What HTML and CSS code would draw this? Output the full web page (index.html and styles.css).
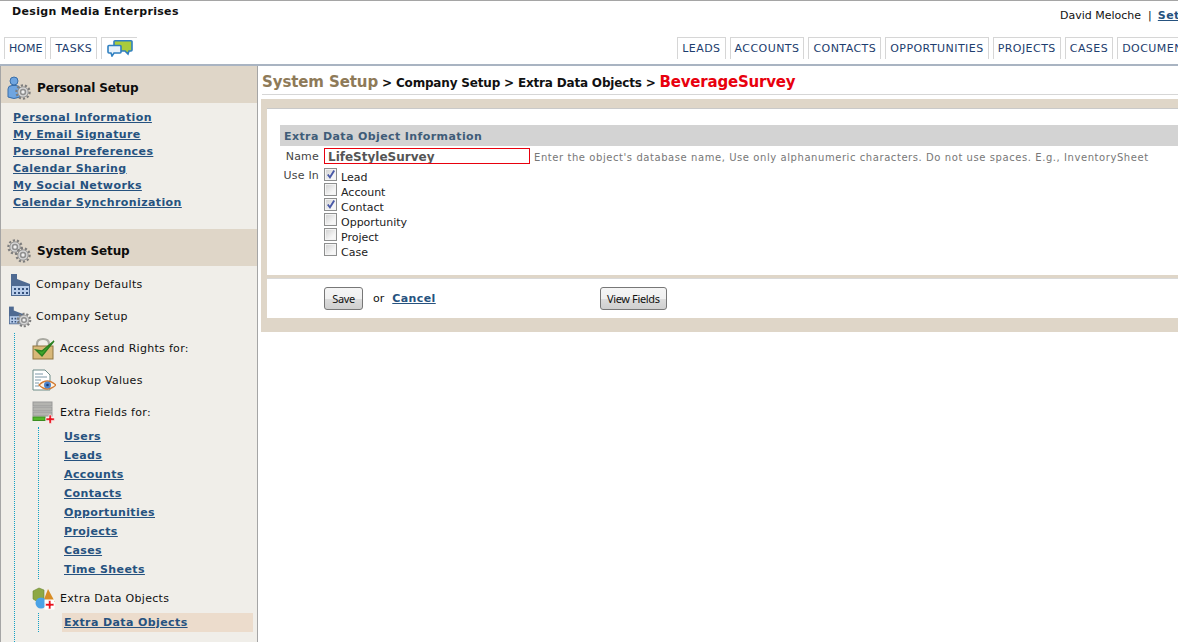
FILE: index.html
```html
<!DOCTYPE html>
<html lang="en">
<head>
<meta charset="utf-8">
<title>Extra Data Objects</title>
<link rel="stylesheet" href="styles.css">
</head>
<body>
<svg class="defs" width="0" height="0" aria-hidden="true">
  <defs>
    <g id="gear">
      <circle cx="0" cy="0" r="6.6" fill="none" stroke="#7d7d7d" stroke-width="2.2" stroke-dasharray="2.2 1.9"/>
      <circle cx="0" cy="0" r="5.2" fill="#d4d4d4" stroke="#8a8a8a" stroke-width=".8"/>
      <circle cx="0" cy="0" r="3.2" fill="#8f8f8f"/>
      <circle cx="0" cy="0" r="1.700" fill="#efefef"/>
    </g>
    <g id="factory">
      <rect x="0" y="0" width="6" height="12" fill="#4f6a92"/>
      <path d="M0 9 L6 5 L19 10 V22 H0Z" fill="#4f6a92"/>
      <rect x="1" y="12" width="17" height="9" fill="#b9cdea"/>
      <path d="M3 14h2v2h-2zM7 14h2v2h-2zM11 14h2v2h-2zM15 14h2v2h-2zM3 18h2v2h-2zM7 18h2v2h-2zM11 18h2v2h-2zM15 18h2v2h-2z" fill="#34507c"/>
    </g>
    <g id="plus">
      <path d="M3 0h2.4v3H8.4v2.4H5.4v3H3v-3H0V3h3Z" fill="#e8101c" stroke="#fff" stroke-width=".6"/>
    </g>
  </defs>
</svg>
<header class="topbar">
  <div class="top-row">
    <div class="company">Design Media Enterprises</div>
    <div class="user">David Meloche<span class="user-sep">|</span><a class="link" href="#">Setup</a></div>
  </div>
  <nav class="tabs">
    <div class="tab-group">
      <a class="tab tab-home" href="#">HOME</a>
      <a class="tab" href="#">TASKS</a>
      <a class="tab tab-icon" href="#">
        <svg width="26" height="17" viewBox="0 0 26 17">
          <path d="M7 1.500 Q7 .8 8 .8 H24 Q25 .8 25 1.500 V10 Q25 11 24 11 H22 L21 14 L18 11 H8 Q7 11 7 10Z" fill="#a9cb3c" stroke="#2f7fc0" stroke-width="1.600"/>
          <path d="M1 6.500 Q1 5.500 2 5.500 H13 Q14 5.500 14 6.500 V12 Q14 13 13 13 H7 L5 16 L4 13 H2 Q1 13 1 12Z" fill="#e8f2fb" stroke="#2f7fc0" stroke-width="1.600"/>
        </svg>
      </a>
    </div>
    <div class="tab-group tab-group-main">
      <a class="tab" href="#">LEADS</a>
      <a class="tab" href="#">ACCOUNTS</a>
      <a class="tab" href="#">CONTACTS</a>
      <a class="tab" href="#">OPPORTUNITIES</a>
      <a class="tab" href="#">PROJECTS</a>
      <a class="tab" href="#">CASES</a>
      <a class="tab" href="#">DOCUMENTS</a>
    </div>
  </nav>
</header>

<div class="layout">
  <aside class="sidebar">
    <section class="side-head">
      <svg class="head-icon" width="24" height="24" viewBox="0 0 24 24">
        <circle cx="7" cy="5" r="4" fill="#6fa5e0" stroke="#3a6ea8"/>
        <path d="M1 21 V13 Q1 9.500 5 9.500 H9 Q13 9.500 13 13 V21 Q7 24 1 21Z" fill="#6fa5e0" stroke="#3a6ea8"/>
        <use href="#gear" transform="translate(16 16)"/>
      </svg>
      <span>Personal Setup</span>
    </section>
    <ul class="personal-links">
      <li><a class="link" href="#">Personal Information</a></li>
      <li><a class="link" href="#">My Email Signature</a></li>
      <li><a class="link" href="#">Personal Preferences</a></li>
      <li><a class="link" href="#">Calendar Sharing</a></li>
      <li><a class="link" href="#">My Social Networks</a></li>
      <li><a class="link" href="#">Calendar Synchronization</a></li>
    </ul>
    <section class="side-head">
      <svg class="head-icon" width="24" height="24" viewBox="0 0 24 24">
        <use href="#gear" transform="translate(8 8)"/>
        <use href="#gear" transform="translate(16 16)"/>
      </svg>
      <span>System Setup</span>
    </section>
    <div class="tree-row level-one first-row">
      <svg class="tree-icon" width="24" height="24" viewBox="0 0 20 24"><use href="#factory" y="1"/></svg>
      <span>Company Defaults</span>
    </div>
    <div class="tree-row level-one">
      <svg class="tree-icon" width="24" height="24" viewBox="0 0 24 24">
        <use href="#factory" transform="scale(.8) translate(0 2)"/>
        <use href="#gear" transform="translate(15 15) scale(.95)"/>
      </svg>
      <span>Company Setup</span>
    </div>
    <div class="branch">
      <div class="tree-row level-two">
        <svg class="tree-icon" width="24" height="24" viewBox="0 0 24 24">
          <path d="M5 10 V7 Q5 2 11 2 Q17 2 17 7 V10" fill="none" stroke="#a8a8a0" stroke-width="2.200"/>
          <rect x="1" y="9" width="20" height="13" fill="#d8b878" stroke="#8e7440"/>
          <path d="M4 13 L10 19 L22 4 L10 14Z" fill="#3fa52c" stroke="#2a8020" stroke-width="1.400"/>
        </svg>
        <span>Access and Rights for:</span>
      </div>
      <div class="tree-row level-two">
        <svg class="tree-icon" width="24" height="24" viewBox="0 0 24 24">
          <path d="M1 1 H13 L18 6 V21 H1Z" fill="#fff" stroke="#6d8b88"/>
          <path d="M3 5h8M3 8h12M3 11h6M3 14h4M3 17h4" stroke="#7c98a8"/>
          <path d="M7 16 Q15 8 24 16 Q15 24 7 16Z" fill="#fdf3e4" stroke="#d27a30" stroke-width="1.200"/>
          <circle cx="15.500" cy="16" r="3.500" fill="#4d84cc"/>
          <circle cx="15.500" cy="16" r="1.300" fill="#1c3a70"/>
        </svg>
        <span>Lookup Values</span>
      </div>
      <div class="tree-row level-two">
        <svg class="tree-icon" width="24" height="24" viewBox="0 0 24 24">
          <rect x="1" y="1" width="19" height="4" fill="#b4b4b0" stroke="#999"/>
          <rect x="1" y="6" width="19" height="4" fill="#b4b4b0" stroke="#999"/>
          <rect x="1" y="11" width="19" height="4" fill="#b4b4b0" stroke="#999"/>
          <rect x="1" y="16" width="12" height="3.500" fill="#54b82c" stroke="#3c8c20"/>
          <use href="#plus" transform="translate(14 14)"/>
        </svg>
        <span>Extra Fields for:</span>
      </div>
      <ul class="sub-links">
        <li><a class="link" href="#">Users</a></li>
        <li><a class="link" href="#">Leads</a></li>
        <li><a class="link" href="#">Accounts</a></li>
        <li><a class="link" href="#">Contacts</a></li>
        <li><a class="link" href="#">Opportunities</a></li>
        <li><a class="link" href="#">Projects</a></li>
        <li><a class="link" href="#">Cases</a></li>
        <li><a class="link" href="#">Time Sheets</a></li>
      </ul>
      <div class="tree-row level-two objects-row">
        <svg class="tree-icon" width="24" height="24" viewBox="0 0 24 24">
          <path d="M1 4 L7 1 L12 3 V12 L6 15 L1 12Z" fill="#8da844" stroke="#6c8434" stroke-width=".6"/>
          <path d="M16 2 L23 15 H11Z" fill="#d88c24"/>
          <circle cx="9" cy="16" r="5.500" fill="#4aa2e6"/>
          <rect x="12.500" y="12.500" width="10" height="10" fill="#fff"/>
          <use href="#plus" transform="translate(13.500 13.500)"/>
        </svg>
        <span>Extra Data Objects</span>
      </div>
      <ul class="sub-links">
        <li class="current"><a class="link" href="#">Extra Data Objects</a></li>
      </ul>
      <div class="tree-row level-two">
        <svg class="tree-icon" width="24" height="24" viewBox="0 0 24 24">
          <path d="M4 7 H18 V22 H4Z" fill="#f3e3a0" stroke="#c8b060"/>
        </svg>
      </div>
    </div>
  </aside>

  <main class="content">
    <h1 class="crumbs"><span class="crumb-root">System Setup</span> &gt; Company Setup &gt; Extra Data Objects &gt; <span class="crumb-current">BeverageSurvey</span></h1>
    <div class="panel">
      <form class="card form-card">
        <h2 class="section-title">Extra Data Object Information</h2>
        <div class="field-row name-row">
          <label class="field-label name-label" for="objname">Name</label>
          <input class="name-input" id="objname" value="LifeStyleSurvey">
          <span class="hint">Enter the object's database name, Use only alphanumeric characters. Do not use spaces. E.g., InventorySheet</span>
        </div>
        <div class="field-row">
          <span class="field-label use-label">Use In</span>
          <div class="checks">
            <label class="check"><input type="checkbox" checked><span>Lead</span></label>
            <label class="check"><input type="checkbox"><span>Account</span></label>
            <label class="check"><input type="checkbox" checked><span>Contact</span></label>
            <label class="check"><input type="checkbox"><span>Opportunity</span></label>
            <label class="check"><input type="checkbox"><span>Project</span></label>
            <label class="check"><input type="checkbox"><span>Case</span></label>
          </div>
        </div>
      </form>
      <div class="card action-card">
        <button class="btn save-btn" type="button">Save</button>
        <span class="or">or</span>
        <a class="link cancel" href="#">Cancel</a>
        <button class="btn view-btn" type="button">View Fields</button>
      </div>
    </div>
  </main>
</div>
</body>
</html>
```
FILE: styles.css
```css
* { box-sizing: border-box; }
html, body { margin: 0; height: 642px; overflow: hidden; }
body {
  width: 1178px;
  background: #fff;
  color: #111;
  font: 11px/14px "DejaVu Sans", Verdana, sans-serif;
  border-top: 1px solid #a5a5a5;
}
.defs { position: absolute; }
.link { color: #26527f; font-weight: bold; text-decoration: underline; letter-spacing: .4px; }

.topbar { height: 65px; border-bottom: 2px solid #a9b4c2; overflow: hidden; }
.top-row { display: flex; justify-content: space-between; height: 36px; }
.company { padding: 4px 0 0 12px; font-weight: bold; color: #111; letter-spacing: .33px; }
.user { padding: 8px 0 0; width: 118px; white-space: nowrap; flex: none; }
.user-sep { margin: 0 6px 0 7px; }
.tabs { display: flex; height: 26px; }
.tab-group { display: flex; gap: 4px; flex: none; }
.tab-group:first-child { padding-left: 4px; }
.tab-group-main { margin-left: 540px; }
.tab {
  display: flex;
  align-items: center;
  height: 22px;
  padding: 0 4px;
  border: 1px solid #d6d6d6;
  border-bottom: 0;
  color: #1d3d6e;
  text-decoration: none;
  white-space: nowrap;
  letter-spacing: .45px;
}
.tab-home { padding-right: 3px; letter-spacing: 0; }
.tab-icon { padding: 0 0 0 5px; border-right: 0; width: 36px; }

.layout { display: flex; height: 576px; }
.sidebar {
  flex: none;
  width: 258px;
  background: #f0eee9;
  border-left: 1px solid #a5a5a5;
  border-right: 1px solid #a5a5a5;
  overflow: hidden;
}
.side-head {
  display: flex;
  align-items: center;
  gap: 6px;
  height: 37px;
  padding: 7px 0 0 6px;
  background: #dfd6c8;
  font-size: 12px;
  font-weight: bold;
  color: #0c0c0c;
  letter-spacing: -.1px;
}
.head-icon { flex: none; }
.personal-links { list-style: none; margin: 0; padding: 6px 0 0 12px; height: 126px; }
.personal-links li { height: 17px; line-height: 17px; }
.tree-row { display: flex; align-items: center; height: 32px; white-space: nowrap; letter-spacing: .3px; }
.first-row { margin-top: 3px; }
.level-one { padding-left: 8px; gap: 3px; }
.level-two { padding-left: 17px; gap: 4px; }
.tree-icon { flex: none; }
.branch { margin-left: 13px; border-left: 1px dotted #11a0c4; }
.objects-row { margin-top: 4px; }
.sub-links {
  list-style: none;
  margin: -2px 0 0 23px;
  padding: 0 0 0 25px;
  border-left: 1px dotted #11a0c4;
}
.sub-links li { height: 19px; line-height: 19px; }
.current { margin-left: -2px; padding-left: 2px; margin-right: 4px; background: #ecdccc; }

.content { flex: 1; min-width: 0; padding: 4px 0 0 3px; overflow: hidden; }
.crumbs {
  margin: 0 0 0 1px;
  height: 25px;
  padding-top: 2px;
  font-size: 12px;
  line-height: 20px;
  font-weight: bold;
  color: #111;
  white-space: nowrap;
  letter-spacing: -.18px;
  border-bottom: 1px solid #d6d6d6;
}
.crumb-root { font-size: 15px; color: #8e7a58; letter-spacing: -.1px; }
.crumb-current { font-size: 15px; color: #e8000d; letter-spacing: -.2px; }
.panel {
  margin-top: 4px;
  padding: 9px 0 14px 6px;
  background: #dfd6c8;
}
.card { background: #fff; }
.form-card {
  height: 167px;
  padding: 16px 0 0 13px;
  border-top: 1px solid #c9c9c9;
}
.section-title {
  margin: 0;
  height: 21px;
  padding: 1px 0 0 4px;
  background: #d3d3d3;
  color: #3f5c78;
  font-size: 11px;
  line-height: 21px;
  font-weight: bold;
  letter-spacing: .4px;
}
.field-row { display: flex; align-items: flex-start; color: #333; }
.name-row { margin-top: 1px; align-items: center; height: 18px; }
.field-label { width: 39px; text-align: right; flex: none; color: #444; letter-spacing: .2px; }
.name-label { padding-top: 2px; }
.use-label { margin-top: 4px; }
.name-input {
  width: 206px;
  height: 16px;
  margin: 0 4px 0 5px;
  padding: 2px 0 0 3px;
  border: 1px solid #e8000d;
  font: bold 12px "DejaVu Sans", Verdana, sans-serif;
  color: #555;
  outline: 0;
}
.hint { font-size: 10px; color: #777; white-space: nowrap; letter-spacing: .57px; padding-top: 3px; }
.checks { display: flex; flex-direction: column; margin: 3px 0 0 5px; }
.check { display: flex; align-items: flex-start; height: 15px; gap: 4px; color: #222; }
.check span { margin-top: 3px; }
.check input {
  appearance: none;
  width: 13px;
  height: 13px;
  margin: 0;
  border: 1px solid #8e8f8f;
  box-shadow: inset 0 0 0 1px #f4f4f4;
  background: linear-gradient(135deg, #cfcfcf, #f6f6f6 70%);
  position: relative;
}
.check input:checked::after {
  content: "";
  position: absolute;
  left: 2px;
  top: 1px;
  width: 8px;
  height: 9px;
  background: #4a5aa8;
  clip-path: polygon(0 55%, 20% 45%, 35% 65%, 80% 0, 100% 10%, 38% 100%);
}
.action-card {
  display: flex;
  align-items: center;
  height: 40px;
  margin-top: 3px;
  padding: 0 0 1px 57px;
  border-top: 1px solid #d9d9d9;
}
.btn {
  height: 23px;
  padding: 0;
  border: 1px solid #777;
  border-radius: 3px;
  background: linear-gradient(#f5f5f5, #f0f0f0 50%, #dcdcdc 52%, #cfcfcf);
  font: 11px "Noto Sans", "DejaVu Sans", sans-serif;
  letter-spacing: -.35px;
  color: #111;
}
.save-btn { width: 39px; }
.or { margin: 0 7px 0 10px; padding-top: 2px; }
.cancel { margin-left: 1px; padding-top: 2px; }
.view-btn { width: 67px; margin-left: 164px; }
```
